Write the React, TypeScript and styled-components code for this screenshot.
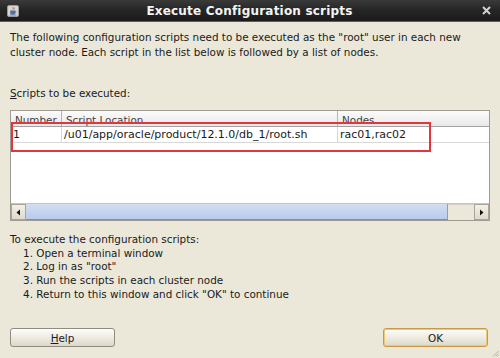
import React from 'react';
import styled, { createGlobalStyle } from 'styled-components';

const GlobalStyle = createGlobalStyle`
  html, body {
    margin: 0;
    padding: 0;
    background: #ebe8da;
  }
  body {
    font-family: "DejaVu Sans", "Liberation Sans", sans-serif;
    font-size: 10.4px;
    color: #1a1a1a;
  }
`;

const Window = styled.div`
  position: relative;
  width: 500px;
  height: 358px;
  display: flex;
  flex-direction: column;
  background: #ebe8da;
  overflow: hidden;
`;

const TitleBar = styled.div`
  height: 21px;
  display: flex;
  align-items: center;
  padding: 0 9px 0 7px;
  background: linear-gradient(#3a3a3a 0%, #262626 45%, #1b1b1b 100%);
  border-bottom: 1px solid #56606c;
`;

const TitleText = styled.div`
  flex: 1;
  text-align: center;
  padding-right: 2px;
  color: #f4f4f4;
  font-weight: bold;
  font-size: 12px;
  letter-spacing: 0.2px;
`;

const Body = styled.div`
  flex: 1;
  display: flex;
  flex-direction: column;
  padding: 8px 10px 11px 10px;
`;

const Paragraph = styled.div`
  line-height: 15px;
`;

const SectionLabel = styled.div`
  margin-top: 26px;
  margin-bottom: 9px;
  line-height: 15px;
`;

const Mnemonic = styled.span`
  text-decoration: underline;
  text-underline-offset: 1px;
`;

const ScrollPane = styled.div`
  height: 109px;
  border: 1px solid #9d9b92;
  background: #ffffff;
  display: flex;
  flex-direction: column;
`;

const Viewport = styled.div`
  flex: 1;
  overflow: hidden;
`;

const Row = styled.div<{ $header?: boolean }>`
  display: grid;
  grid-template-columns: 51px 276px 151px;
  height: 15px;
  background: ${p => (p.$header ? 'linear-gradient(#fbfbfb, #e9e9e9)' : '#ffffff')};
  border-bottom: 1px solid ${p => (p.$header ? '#a3a3a3' : '#d8d8d8')};
`;

const Cell = styled.div<{ $header?: boolean }>`
  padding-left: ${p => (p.$header ? '4px' : '2px')};
  font-size: ${p => (p.$header ? '10.4px' : '11px')};
  line-height: ${p => (p.$header ? '18px' : '16px')};
  color: ${p => (p.$header ? '#444444' : '#1a1a1a')};
  border-right: 1px solid ${p => (p.$header ? '#b5b5b5' : '#d8d8d8')};
  white-space: nowrap;
  overflow: hidden;
  &:last-child {
    border-right: none;
  }
`;

const HScrollBar = styled.div`
  height: 16px;
  display: flex;
  background: #ebe8da;
  border-top: 1px solid #c9c6b8;
`;

const ArrowButton = styled.div`
  width: 15px;
  display: flex;
  align-items: center;
  justify-content: center;
  background: linear-gradient(#f3f1e8, #dedbcd);
  border: 1px solid #a9a698;
  box-sizing: border-box;
`;

const Thumb = styled.div`
  width: 422px;
  background: linear-gradient(#d2def2, #b8cbea);
  border-bottom: 1px solid #7d8fba;
  border-right: 1px solid #8c9cc2;
  box-sizing: border-box;
`;

const Track = styled.div`
  flex: 1;
  background: #ebe8da;
  border-top: 1px solid #d4d1c4;
`;

const Instructions = styled.div`
  margin-top: 12px;
  line-height: 13.7px;
`;

const Step = styled.div`
  padding-left: 13px;
`;

const ButtonRow = styled.div`
  margin-top: auto;
  margin-right: 2px;
  display: flex;
  justify-content: space-between;
`;

const Button = styled.button<{ $default?: boolean }>`
  width: 105px;
  height: 19px;
  font-family: inherit;
  font-size: 10.4px;
  color: #1a1a1a;
  padding: 0;
  border-radius: 3px;
  background: linear-gradient(#fdfdfb, #ece9df 55%, #dcd8c9);
  border: 1px solid ${p => (p.$default ? '#c99a45' : '#8e8b80')};
  box-shadow: ${p => (p.$default ? 'inset 0 0 0 1px #efc874' : 'inset 0 1px 0 #ffffff')};
`;

const Highlight = styled.div`
  position: absolute;
  left: 11px;
  top: 122px;
  width: 420px;
  height: 30px;
  border: 2px solid #e5353c;
  box-sizing: border-box;
  pointer-events: none;
`;

const Grip = styled.svg`
  position: absolute;
  right: 1px;
  bottom: 1px;
`;

const JavaIcon = () => (
  <svg width="12" height="12" viewBox="0 0 12 12">
    <rect x="0.5" y="0.5" width="11" height="11" rx="1.5" fill="#d6d6d6" stroke="#9a9a9a" />
    <path d="M6 2.2c-1 .8 1 1.4 0 2.4M7.2 2.6c-.6.6.6 1-.2 1.8" stroke="#c2561f" strokeWidth="0.8" fill="none" />
    <path d="M3.2 5.6h5.2v2.3c0 1-1 1.6-2.6 1.6s-2.6-.6-2.6-1.6z" fill="#4f6fa3" />
    <path d="M8.4 6.2c1 0 1 1.4 0 1.4" stroke="#4f6fa3" strokeWidth="0.8" fill="none" />
    <path d="M2.6 10h6.8" stroke="#4f6fa3" strokeWidth="0.8" />
  </svg>
);

const CloseIcon = () => (
  <svg width="9" height="9" viewBox="0 0 9 9">
    <path d="M1 1L8 8M8 1L1 8" stroke="#d2d2d2" strokeWidth="2" />
  </svg>
);

const LeftArrow = () => (
  <svg width="5" height="7" viewBox="0 0 5 7">
    <path d="M4 0.5L0.5 3.5L4 6.5z" fill="#111" />
  </svg>
);

const RightArrow = () => (
  <svg width="5" height="7" viewBox="0 0 5 7">
    <path d="M1 0.5L4.5 3.5L1 6.5z" fill="#111" />
  </svg>
);

const scripts = [
  { number: '1', location: '/u01/app/oracle/product/12.1.0/db_1/root.sh', nodes: 'rac01,rac02' },
];

const steps = [
  'Open a terminal window',
  'Log in as "root"',
  'Run the scripts in each cluster node',
  'Return to this window and click "OK" to continue',
];

export default function App() {
  return (
    <Window>
      <GlobalStyle />
      <TitleBar>
        <JavaIcon />
        <TitleText>Execute Configuration scripts</TitleText>
        <CloseIcon />
      </TitleBar>
      <Body>
        <Paragraph>
          The following configuration scripts need to be executed as the "root" user in each new
          <br />
          cluster node. Each script in the list below is followed by a list of nodes.
        </Paragraph>
        <SectionLabel>
          <Mnemonic>S</Mnemonic>cripts to be executed:
        </SectionLabel>
        <ScrollPane>
          <Viewport>
            <Row $header>
              <Cell $header>Number</Cell>
              <Cell $header>Script Location</Cell>
              <Cell $header>Nodes</Cell>
            </Row>
            {scripts.map(s => (
              <Row key={s.number}>
                <Cell>{s.number}</Cell>
                <Cell>{s.location}</Cell>
                <Cell>{s.nodes}</Cell>
              </Row>
            ))}
          </Viewport>
          <HScrollBar>
            <ArrowButton>
              <LeftArrow />
            </ArrowButton>
            <Thumb />
            <Track />
            <ArrowButton>
              <RightArrow />
            </ArrowButton>
          </HScrollBar>
        </ScrollPane>
        <Instructions>
          To execute the configuration scripts:
          {steps.map((s, i) => (
            <Step key={i}>
              {i + 1}. {s}
            </Step>
          ))}
        </Instructions>
        <ButtonRow>
          <Button>
            <Mnemonic>H</Mnemonic>elp
          </Button>
          <Button $default>OK</Button>
        </ButtonRow>
      </Body>
      <Highlight />
      <Grip width="7" height="7" viewBox="0 0 7 7">
        <path d="M6.5 1L1 6.5M6.5 3.5L3.5 6.5M6.5 5.5L5.5 6.5" stroke="#a8a596" strokeWidth="0.8" />
      </Grip>
    </Window>
  );
}
